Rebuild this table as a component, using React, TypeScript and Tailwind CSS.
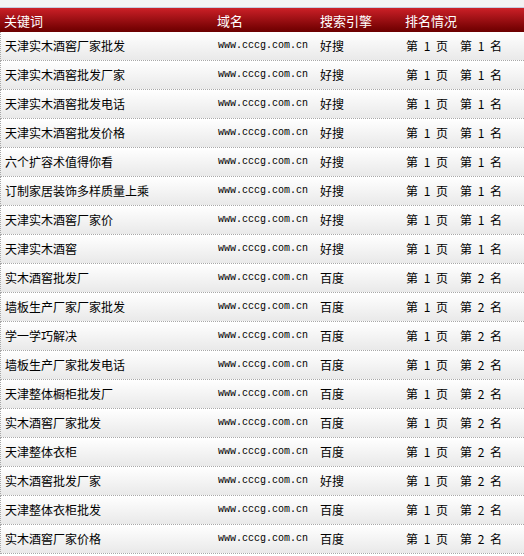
import React from "react";

const rows: [string, string, string, string][] = [
  ["天津实木酒窖厂家批发", "好搜", "1", "1"],
  ["天津实木酒窖批发厂家", "好搜", "1", "1"],
  ["天津实木酒窖批发电话", "好搜", "1", "1"],
  ["天津实木酒窖批发价格", "好搜", "1", "1"],
  ["六个扩容术值得你看", "好搜", "1", "1"],
  ["订制家居装饰多样质量上乘", "好搜", "1", "1"],
  ["天津实木酒窖厂家价", "好搜", "1", "1"],
  ["天津实木酒窖", "好搜", "1", "1"],
  ["实木酒窖批发厂", "百度", "1", "2"],
  ["墙板生产厂家厂家批发", "百度", "1", "2"],
  ["学一学巧解决", "百度", "1", "2"],
  ["墙板生产厂家批发电话", "百度", "1", "2"],
  ["天津整体橱柜批发厂", "百度", "1", "2"],
  ["实木酒窖厂家批发", "百度", "1", "2"],
  ["天津整体衣柜", "百度", "1", "2"],
  ["实木酒窖批发厂家", "好搜", "1", "2"],
  ["天津整体衣柜批发", "百度", "1", "2"],
  ["实木酒窖厂家价格", "百度", "1", "2"],
];

const cjk = "font-['Noto_Sans_CJK_SC','Noto_Sans',sans-serif]";

export default function App() {
  return (
    <div className={`w-[524px] h-[556px] bg-white overflow-hidden ${cjk}`}>
      <div className="h-[8px] bg-[#f3f3f3] border-b border-[#c5cde0]" />
      <div className="h-[24px] grid grid-cols-[213px_103px_85px_1fr] items-center bg-gradient-to-b from-[#cc2027] to-[#6b0000] text-white text-[13px] leading-none">
        <div className="pl-[4px]">关键词</div>
        <div className="pl-[4px]">域名</div>
        <div className="pl-[4px]">搜索引擎</div>
        <div className="pl-[4px]">排名情况</div>
      </div>
      {rows.map(([kw, eng, p, n], i) => (
        <div
          key={i}
          className="h-[29px] grid grid-cols-[213px_103px_85px_1fr] items-center bg-gradient-to-b from-white to-[#e9e9e9] border-b border-dotted border-[#a8a8a8] border-l text-[12px] text-black leading-none"
        >
          <div className="pl-[4px]">{kw}</div>
          <div className="pl-[4px] font-['Liberation_Mono',monospace] text-[10px]">
            www.cccg.com.cn
          </div>
          <div className="pl-[3px]">{eng}</div>
          <div className="pl-[4px] flex items-center">
            <span>第</span>
            <span className="w-[18px] text-center">{p}</span>
            <span>页</span>
            <span className="ml-[12px]">第</span>
            <span className="w-[18px] text-center">{n}</span>
            <span>名</span>
          </div>
        </div>
      ))}
    </div>
  );
}
